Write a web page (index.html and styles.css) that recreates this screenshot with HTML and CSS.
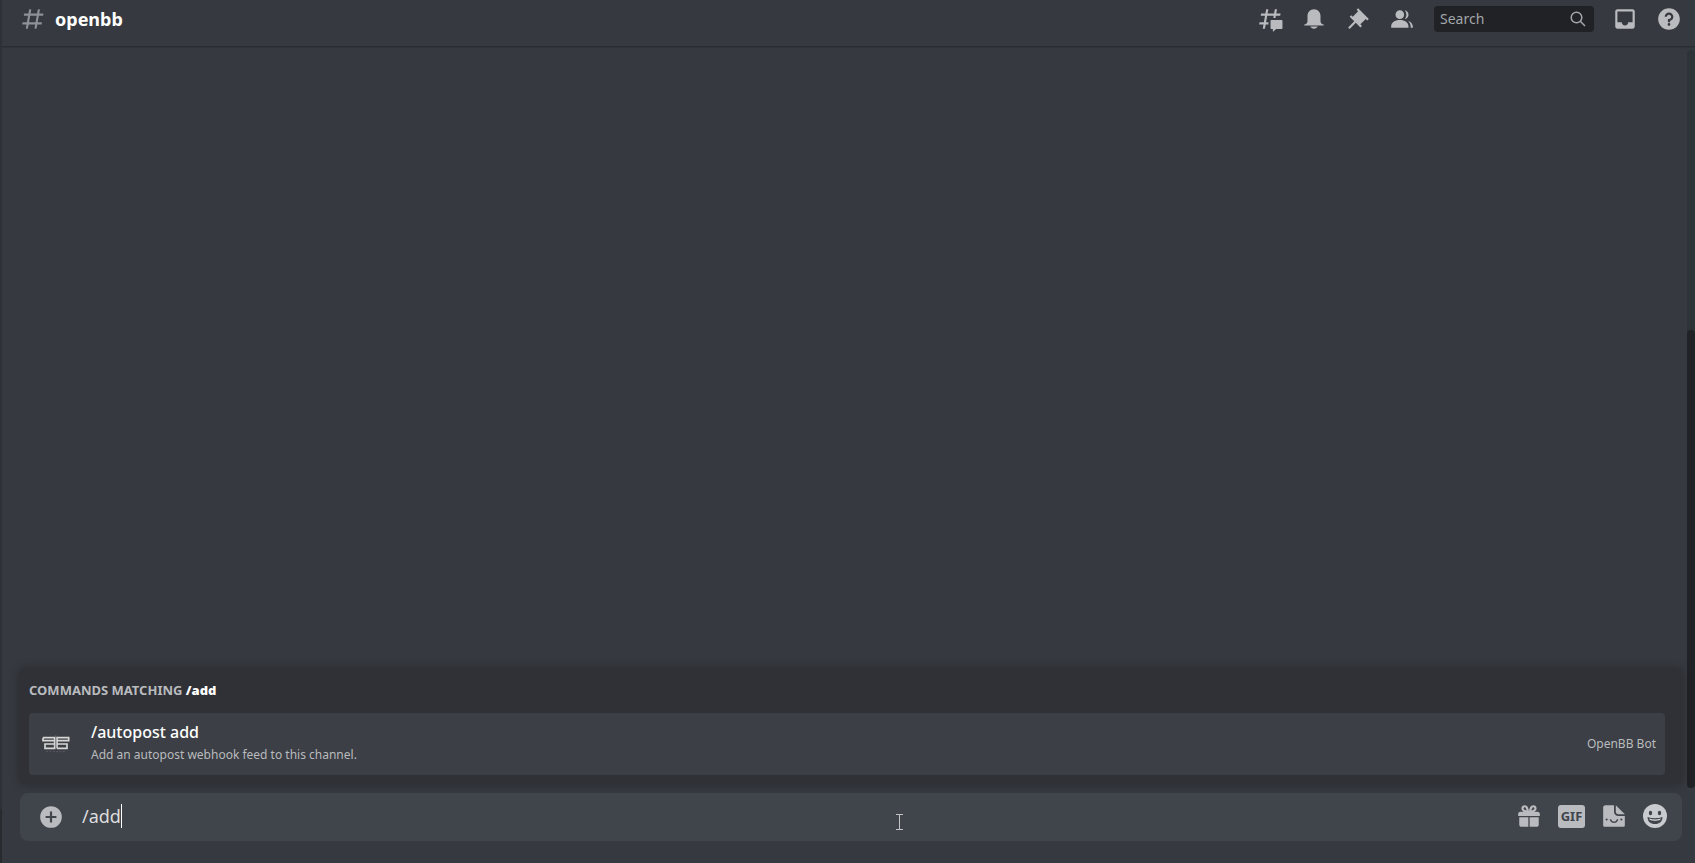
FILE: index.html
```html
<!DOCTYPE html>
<html lang="en">
<head>
<meta charset="utf-8">
<title>openbb</title>
<link rel="stylesheet" href="styles.css">
</head>
<body>
<div class="app">
  <aside class="sidebar"><div class="sidebar-user"></div></aside>
  <main class="chat">
    <header class="topbar">
      <svg class="icon hash" viewBox="0 0 24 24"><path d="M5.887 21C5.575 21 5.34 20.719 5.394 20.413L6 17H2.595C2.284 17 2.049 16.72 2.103 16.414L2.278 15.414C2.319 15.175 2.527 15 2.77 15H6.35L7.41 9H4.005C3.694 9 3.459 8.72 3.513 8.414L3.688 7.414C3.729 7.175 3.937 7 4.18 7H7.76L8.397 3.413C8.439 3.174 8.647 3 8.889 3H9.873C10.185 3 10.42 3.281 10.366 3.587L9.76 7H15.76L16.397 3.413C16.439 3.174 16.647 3 16.889 3H17.873C18.185 3 18.42 3.281 18.366 3.587L17.76 7H21.165C21.476 7 21.711 7.28 21.657 7.586L21.482 8.586C21.441 8.825 21.233 9 20.99 9H17.41L16.35 15H19.755C20.066 15 20.301 15.28 20.247 15.586L20.072 16.586C20.031 16.825 19.823 17 19.58 17H16L15.363 20.587C15.321 20.826 15.113 21 14.871 21H13.887C13.576 21 13.34 20.719 13.394 20.413L14 17H8L7.363 20.587C7.321 20.826 7.113 21 6.871 21H5.887ZM9.41 9L8.35 15H14.35L15.41 9H9.41Z"/></svg>
      <h1 class="channel">openbb</h1>
      <div class="tools">
        <button class="tool" aria-label="Threads"><svg class="icon" viewBox="0 0 24 24"><path d="M5.433 21C5.358 21 5.302 20.933 5.315 20.859L6 17H2.143C2.068 17 2.012 16.933 2.025 16.859L2.333 15.099C2.343 15.042 2.392 15 2.451 15H6.35L7.41 9H3.553C3.478 9 3.422 8.933 3.435 8.859L3.743 7.099C3.753 7.042 3.802 7 3.861 7H7.76L8.452 3.099C8.463 3.042 8.512 3 8.57 3H10.327C10.401 3 10.458 3.067 10.445 3.141L9.76 7H15.76L16.452 3.099C16.463 3.042 16.512 3 16.571 3H18.327C18.401 3 18.458 3.067 18.445 3.141L17.76 7H21.617C21.692 7 21.748 7.067 21.735 7.141L21.427 8.901C21.417 8.958 21.367 9 21.309 9H17.41L17.05 11.04H15.05L15.41 9H9.41L8.35 15H10.56V17H8L7.307 20.901C7.297 20.958 7.248 21 7.189 21H5.433Z"/><path d="M13.44 12.96C12.91 12.96 12.48 13.39 12.48 13.92V20.221C12.48 20.752 12.91 21.181 13.44 21.181H14.4C14.533 21.181 14.64 21.289 14.64 21.421V23.46C14.64 23.668 14.887 23.777 15.041 23.638L17.486 21.429C17.662 21.27 17.892 21.181 18.129 21.181H22.56C23.09 21.181 23.52 20.752 23.52 20.221V13.92C23.52 13.39 23.09 12.96 22.56 12.96H13.44Z"/></svg></button>
        <button class="tool" aria-label="Notification settings"><svg class="icon" viewBox="0 0 24 24"><path d="M18 9V14C18 15.657 19.344 17 21 17V18H3V17C4.656 17 6 15.657 6 14V9C6 5.686 8.686 3 12 3C15.314 3 18 5.686 18 9ZM12 21C10.524 21 9.248 20.19 8.555 19H15.445C14.752 20.19 13.476 21 12 21Z"/></svg></button>
        <button class="tool" aria-label="Pinned messages"><svg class="icon" viewBox="0 0 24 24"><path d="M22 12L12.101 2.101L10.686 3.514L12.101 4.929L7.151 9.879L5.736 8.465L4.322 9.88L8.565 14.122L2.908 19.778L4.322 21.192L9.979 15.536L14.222 19.778L15.636 18.364L14.222 16.95L19.172 12L20.586 13.414L22 12Z"/></svg></button>
        <button class="tool" aria-label="Member list"><svg class="icon" viewBox="0 0 24 24"><path d="M14 8.006C14 10.211 12.206 12.006 10 12.006C7.795 12.006 6 10.211 6 8.006C6 5.801 7.794 4.006 10 4.006C12.206 4.006 14 5.801 14 8.006ZM2 19.006C2 15.473 5.29 13.006 10 13.006C14.711 13.006 18 15.473 18 19.006V20.006H2V19.006Z"/><path d="M20 20.006H22V19.006C22 16.443 20.27 14.442 17.521 13.535C19.062 14.913 20 16.806 20 19.006V20.006ZM14.883 11.908C16.666 11.504 18 9.908 18 8.006C18 5.969 16.469 4.282 14.497 4.037C15.432 5.095 16 6.485 16 8.006C16 9.449 15.489 10.774 14.638 11.81L14.883 11.908Z"/></svg></button>
        <label class="search">
          <input class="search-input" type="text" placeholder="Search" aria-label="Search">
          <svg class="search-icon" viewBox="0 0 16 16"><circle cx="6.5" cy="6.5" r="5.3"/><path d="M10.3 10.3L15 15"/></svg>
        </label>
        <button class="tool" aria-label="Inbox"><svg class="icon" viewBox="0 0 24 24"><path d="M19 3H4.99C3.88 3 3.01 3.89 3.01 5L3 19C3 20.1 3.88 21 4.99 21H19C20.1 21 21 20.1 21 19V5C21 3.89 20.1 3 19 3ZM19 15H15C15 16.66 13.65 18 12 18C10.35 18 9 16.66 9 15H4.99V5H19V15Z"/></svg></button>
        <button class="tool" aria-label="Help"><svg class="icon" viewBox="0 0 24 24"><path d="M12 2C6.486 2 2 6.487 2 12C2 17.515 6.486 22 12 22C17.514 22 22 17.515 22 12C22 6.487 17.514 2 12 2ZM12 18.25C11.31 18.25 10.75 17.691 10.75 17C10.75 16.31 11.31 15.75 12 15.75C12.69 15.75 13.25 16.31 13.25 17C13.25 17.691 12.69 18.25 12 18.25ZM13 13.875V15H11V12H12C13.104 12 14 11.103 14 10C14 8.896 13.104 8 12 8C10.896 8 10 8.896 10 10H8C8 7.795 9.795 6 12 6C14.205 6 16 7.795 16 10C16 11.861 14.723 13.429 13 13.875Z"/></svg></button>
      </div>
    </header>
    <section class="messages"><div class="track"><div class="thumb"></div></div></section>
    <footer class="dock">
      <section class="commands">
        <h2 class="commands-title">COMMANDS MATCHING <strong class="query">/add</strong></h2>
        <button class="command">
          <svg class="bot-logo" viewBox="0 0 84 54"><path class="mark" d="M3 8H38V40H9V27H38M3 8V17H38M45 40V8H80V17H45M45 27H75V40H45"/><path class="stem" d="M41.500 1V42"/><path class="wordmark" d="M13 50H72"/></svg>
          <span class="command-text">
            <span class="command-name">/autopost add</span>
            <span class="command-info">Add an autopost webhook feed to this channel.</span>
          </span>
          <span class="command-bot">OpenBB Bot</span>
        </button>
      </section>
      <div class="composer">
        <button class="tool attach" aria-label="Add attachment"><svg class="icon" viewBox="0 0 24 24"><path d="M12 2A10 10 0 1 0 12 22A10 10 0 1 0 12 2ZM17 13H13V17H11V13H7V11H11V7H13V11H17Z"/></svg></button>
        <div class="entry">
          <input class="message" type="text" value="/add" aria-label="Message #openbb"><span class="caret"></span>
        </div>
        <div class="extras">
          <button class="tool" aria-label="Send a gift"><svg class="icon" viewBox="0 0 24 24"><path fill-rule="evenodd" d="M16.886 8H20C21.104 8 22 8.896 22 10V12H2V10C2 8.896 2.897 8 4 8H7.114C6.663 7.764 6.236 7.477 5.879 7.121C4.709 5.951 4.709 4.048 5.879 2.879C7.012 1.746 8.986 1.746 10.121 2.877C11.758 4.514 11.979 7.595 12 7.941C12.022 7.595 12.242 4.514 13.879 2.877C15.014 1.745 16.986 1.746 18.121 2.877C19.29 4.049 19.29 5.952 18.121 7.121C17.764 7.477 17.337 7.764 16.886 8ZM7.293 5.707C6.903 5.316 6.903 4.682 7.293 4.292C7.481 4.103 7.732 4 8 4C8.268 4 8.519 4.103 8.707 4.292C9.297 4.882 9.641 5.94 9.825 6.822C8.945 6.639 7.879 6.293 7.293 5.707ZM14.174 6.824C14.359 5.941 14.702 4.883 15.293 4.293C15.481 4.103 15.732 4 16 4C16.268 4 16.519 4.103 16.706 4.291C17.096 4.682 17.097 5.316 16.707 5.707C16.116 6.298 15.057 6.642 14.174 6.824ZM3 13.2H11.4V22H5C3.896 22 3 21.102 3 20V13.2ZM12.6 13.2V22H19C20.104 22 21 21.102 21 20V13.2H12.6Z"/></svg></button>
          <button class="gif">GIF</button>
          <button class="tool" aria-label="Stickers"><svg class="icon" viewBox="0 0 24 24"><path fill-rule="evenodd" d="M12 2H4C2.9 2 2 2.9 2 4V20.5C2 21.4 2.7 22 3.5 22H20.5C21.4 22 22 21.4 22 20.5V12H16C13.8 12 12 10.2 12 8ZM5.2 14.2A1 1 0 1 1 5.2 16.2A1 1 0 1 1 5.2 14.2ZM18.8 14.2A1 1 0 1 1 18.8 16.2A1 1 0 1 1 18.8 14.2ZM8 15H9.4C9.7 16.4 10.7 17.1 12 17.1S14.3 16.4 14.6 15H16C15.7 17.2 14 18.5 12 18.5S8.300 17.2 8 15Z"/><path d="M13.700 2L22 10.300H16C14.700 10.300 13.700 9.300 13.700 8Z"/></svg></button>
          <button class="tool emoji" aria-label="Emoji"><svg class="icon" viewBox="0 0 24 24"><circle cx="12" cy="12" r="12"/><ellipse class="face" cx="7.500" cy="9" rx="1.700" ry="2.200"/><ellipse class="face" cx="16.500" cy="9" rx="1.700" ry="2.200"/><path class="face" d="M4.500 13C9 14.600 15 14.600 19.500 13C19.500 17.500 16.500 20 12 20S4.500 17.500 4.500 13Z"/><path class="teeth" d="M6 14.500C10 15.700 14 15.700 18 14.500C17.500 16 16 16.700 12 16.700S6.500 16 6 14.500Z"/></svg></button>
        </div>
        <svg class="pointer" viewBox="0 0 7 16"><path d="M0 .5H7M0 15.500H7M3.500 0V16"/></svg>
      </div>
    </footer>
  </main>
</div>
</body>
</html>
```
FILE: styles.css
```css
* { box-sizing: border-box; }
body { margin: 0; background: #36393f; color: #fff; font-family: "Noto Sans", "Open Sans", sans-serif; }
button, input { font: inherit; color: inherit; background: none; border: 0; padding: 0; margin: 0; }
input { outline: none; }
.app { display: flex; height: 100vh; overflow: hidden; }
.sidebar { display: flex; flex-direction: column; justify-content: flex-end; width: 2px; background: #2f3136; }
.sidebar-user { height: 54px; background: #292b2f; }
.chat { flex: 1; min-width: 0; display: flex; flex-direction: column; background: #36393f; }

.topbar { display: flex; align-items: center; padding: 6px 13px 14px 18px; border-bottom: 1px solid #2a2c31; box-shadow: 0 1px 1px rgba(0, 0, 0, .1); }
.icon { display: block; width: 26px; height: 26px; fill: #b9bbbe; }
.hash { fill: #8e9297; }
.channel { flex: 1; margin: 0 0 0 9px; font-size: 18px; line-height: 24px; font-weight: 700; }
.tools { display: flex; align-items: center; gap: 18px; }
.tool { display: block; }
.search { display: flex; align-items: center; width: 160px; height: 26px; margin-left: 1px; padding: 0 8px 0 6px; border-radius: 4px; background: #202225; }
.search-input { flex: 1; min-width: 0; font-size: 14px; line-height: 20px; }
.search-input::placeholder { color: #a3a6aa; opacity: 1; }
.search-icon { width: 16px; height: 16px; fill: none; stroke: #a3a6aa; stroke-width: 1.500; }

.messages { flex: 1; min-height: 0; display: flex; justify-content: flex-end; padding-top: 3px; margin-bottom: -120px; }
.track { display: flex; align-items: flex-end; width: 8px; border-radius: 4px; background: #2e3338; }
.thumb { width: 8px; height: 62%; border-radius: 4px; background: #202225; }

.dock { position: relative; padding: 0 13px 22px 18px; }
.commands { margin: 0 -1px 9px; padding: 10px 18px 9px 10px; border-radius: 6px; background: #2f3136; box-shadow: 0 0 10px rgba(0, 0, 0, .25); }
.commands-title { margin: 0 0 11px; font-size: 13px; line-height: 24px; font-weight: 700; color: #b9bbbe; }
.query { color: #fff; }
.command { display: flex; align-items: center; width: 100%; height: 62px; padding: 0 9px 0 13px; border-radius: 4px; background: #3c3f45; text-align: left; }
.bot-logo { width: 28px; height: 18px; fill: none; }
.mark { stroke: #d5d7d6; stroke-width: 5; }
.stem { stroke: #85888c; stroke-width: 2; }
.wordmark { stroke: #5b5e63; stroke-width: 3; stroke-dasharray: 5 5; }
.command-text { flex: 1; display: flex; flex-direction: column; padding-left: 21px; }
.command-name { font-size: 16px; line-height: 22px; font-weight: 500; }
.command-info { font-size: 12px; line-height: 24px; color: #b9bbbe; }
.command-bot { font-size: 12px; line-height: 20px; color: #b9bbbe; }

.composer { position: relative; display: flex; align-items: center; height: 48px; padding: 0 15px 0 18px; border-radius: 8px; background: #40444b; }
.entry { flex: 1; display: flex; align-items: center; padding: 0 0 2px 18px; }
.message { field-sizing: content; font-size: 18px; line-height: 24px; color: #dcddde; }
.caret { width: 1px; height: 24px; background: #fff; }
.extras { display: flex; align-items: center; gap: 16px; padding-bottom: 2px; }
.gif { width: 27px; height: 23px; border-radius: 3px; background: #b9bbbe; color: #40444b; font-size: 13px; line-height: 23px; font-weight: 700; }
.emoji .icon { width: 24px; height: 24px; }
.emoji circle { fill: #c8cccf; }
.emoji .face { fill: #40444b; }
.emoji .teeth { fill: #dcddde; }
.pointer { position: absolute; left: 52.700%; top: 21px; width: 7px; height: 16px; fill: none; stroke: #c3c4c5; stroke-width: 1; }
```
